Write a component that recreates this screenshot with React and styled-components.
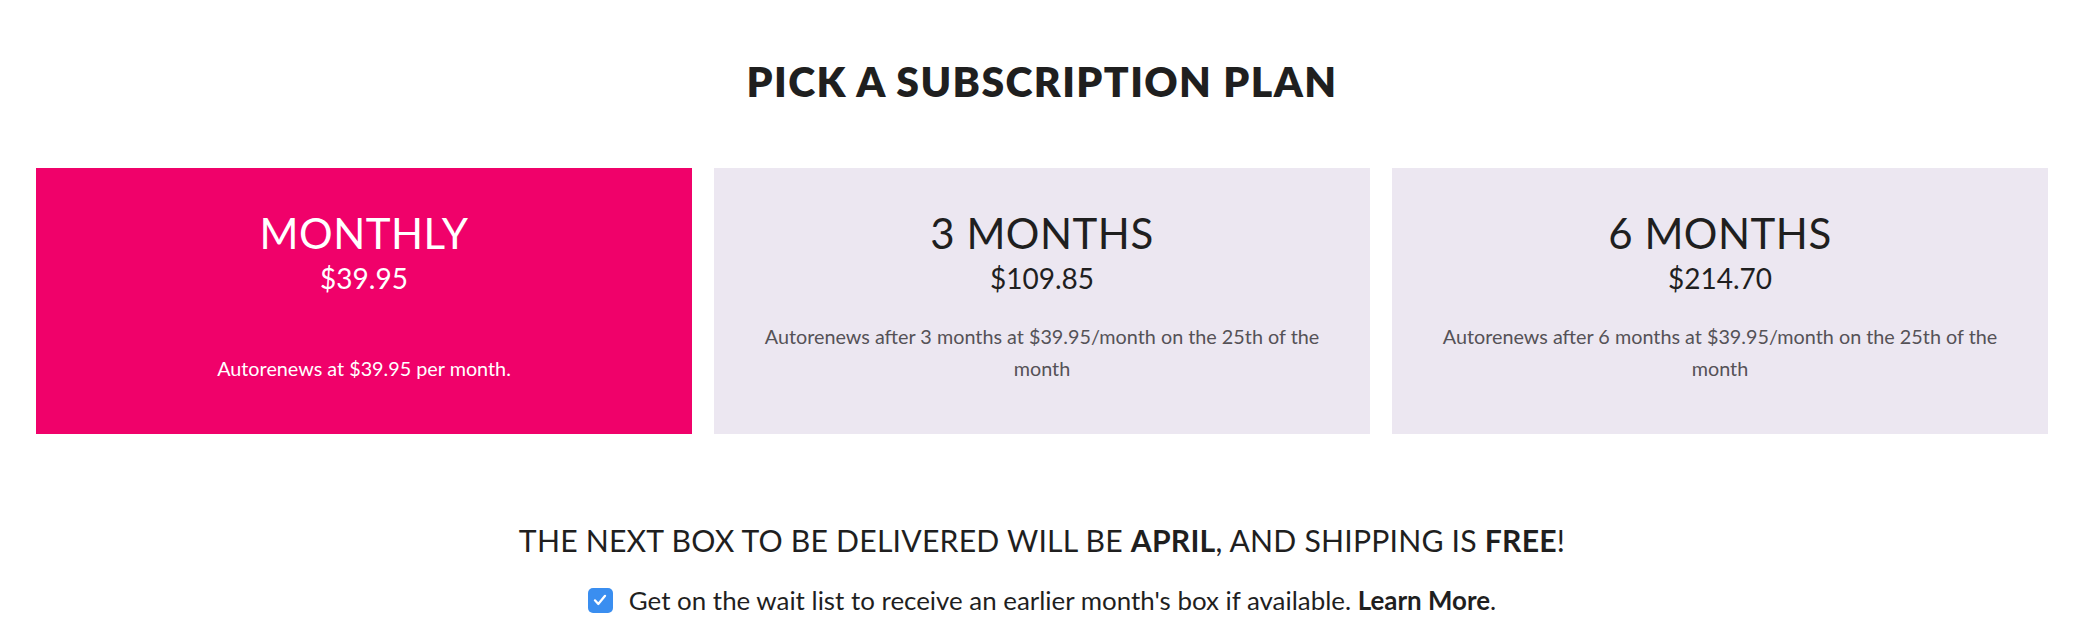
import React from "react";
import styled, { createGlobalStyle } from "styled-components";

const Global = createGlobalStyle`
  html, body { margin: 0; padding: 0; background: #fff; }
  body { font-family: "Lato", "Open Sans", sans-serif; color: #1d1d1f; }
  * { box-sizing: border-box; }
`;

const Page = styled.div`
  width: 2076px;
  padding: 56px 28px 0 36px;
  display: flex;
  flex-direction: column;
  align-items: stretch;
`;

const Title = styled.h1`
  margin: 0;
  text-align: center;
  font-size: 41px;
  line-height: 52px;
  font-weight: 800;
  letter-spacing: 1.4px;
  color: #1f1f1f;
`;

const Plans = styled.div`
  margin-top: 60px;
  display: grid;
  grid-template-columns: repeat(3, 656px);
  gap: 22px;
  height: 266px;
`;

const Card = styled.div`
  background: ${(p) => (p.$active ? "#f0016a" : "#ece7f1")};
  color: ${(p) => (p.$active ? "#ffffff" : "#1f1f1f")};
  display: flex;
  flex-direction: column;
  align-items: center;
  padding: 40px 38px 0;
  text-align: center;
`;

const PlanName = styled.div`
  font-size: 42px;
  line-height: 50px;
  font-weight: 400;
  letter-spacing: 0.5px;
`;

const Price = styled.div`
  margin-top: 3px;
  font-size: 28px;
  line-height: 34px;
  font-weight: 400;
`;

const DescBox = styled.div`
  margin-top: 25px;
  min-height: 64px;
  display: flex;
  align-items: flex-end;
  justify-content: center;
`;

const Desc = styled.div`
  font-size: 19.8px;
  line-height: 32px;
  color: ${(p) => (p.$active ? "#ffffff" : "#555257")};
`;

const Notice = styled.div`
  margin-top: 88px;
  text-align: center;
  font-size: 30.2px;
  line-height: 36px;
  font-weight: 400;
  letter-spacing: 0.2px;
  color: #1f1f1f;
  b { font-weight: 700; }
`;

const WaitRow = styled.label`
  margin-top: 26px;
  display: flex;
  justify-content: center;
  align-items: center;
  gap: 16px;
  font-size: 25.9px;
  line-height: 32px;
  color: #1f1f1f;
  b { font-weight: 700; }
`;

const Check = styled.span`
  width: 25px;
  height: 25px;
  border-radius: 5px;
  background: #3a8ef0;
  display: inline-flex;
  align-items: center;
  justify-content: center;
  flex-shrink: 0;
`;

const plans = [
  { name: "MONTHLY", price: "$39.95", desc: "Autorenews at $39.95 per month.", active: true },
  { name: "3 MONTHS", price: "$109.85", desc: "Autorenews after 3 months at $39.95/month on the 25th of the month" },
  { name: "6 MONTHS", price: "$214.70", desc: "Autorenews after 6 months at $39.95/month on the 25th of the month" },
];

export default function App() {
  return (
    <>
      <Global />
      <Page>
        <Title>PICK A SUBSCRIPTION PLAN</Title>
        <Plans>
          {plans.map((p) => (
            <Card key={p.name} $active={p.active}>
              <PlanName>{p.name}</PlanName>
              <Price>{p.price}</Price>
              <DescBox>
                <Desc $active={p.active}>{p.desc}</Desc>
              </DescBox>
            </Card>
          ))}
        </Plans>
        <Notice>
          THE NEXT BOX TO BE DELIVERED WILL BE <b>APRIL</b>, AND SHIPPING IS <b>FREE</b>!
        </Notice>
        <WaitRow>
          <Check>
            <svg width="18" height="18" viewBox="0 0 16 16" fill="none">
              <path d="M3.5 8.3l3 3.2L12.5 4.3" stroke="#fff" strokeWidth="2" strokeLinecap="round" strokeLinejoin="round" />
            </svg>
          </Check>
          <span>
            Get on the wait list to receive an earlier month's box if available. <b>Learn More</b>.
          </span>
        </WaitRow>
      </Page>
    </>
  );
}
